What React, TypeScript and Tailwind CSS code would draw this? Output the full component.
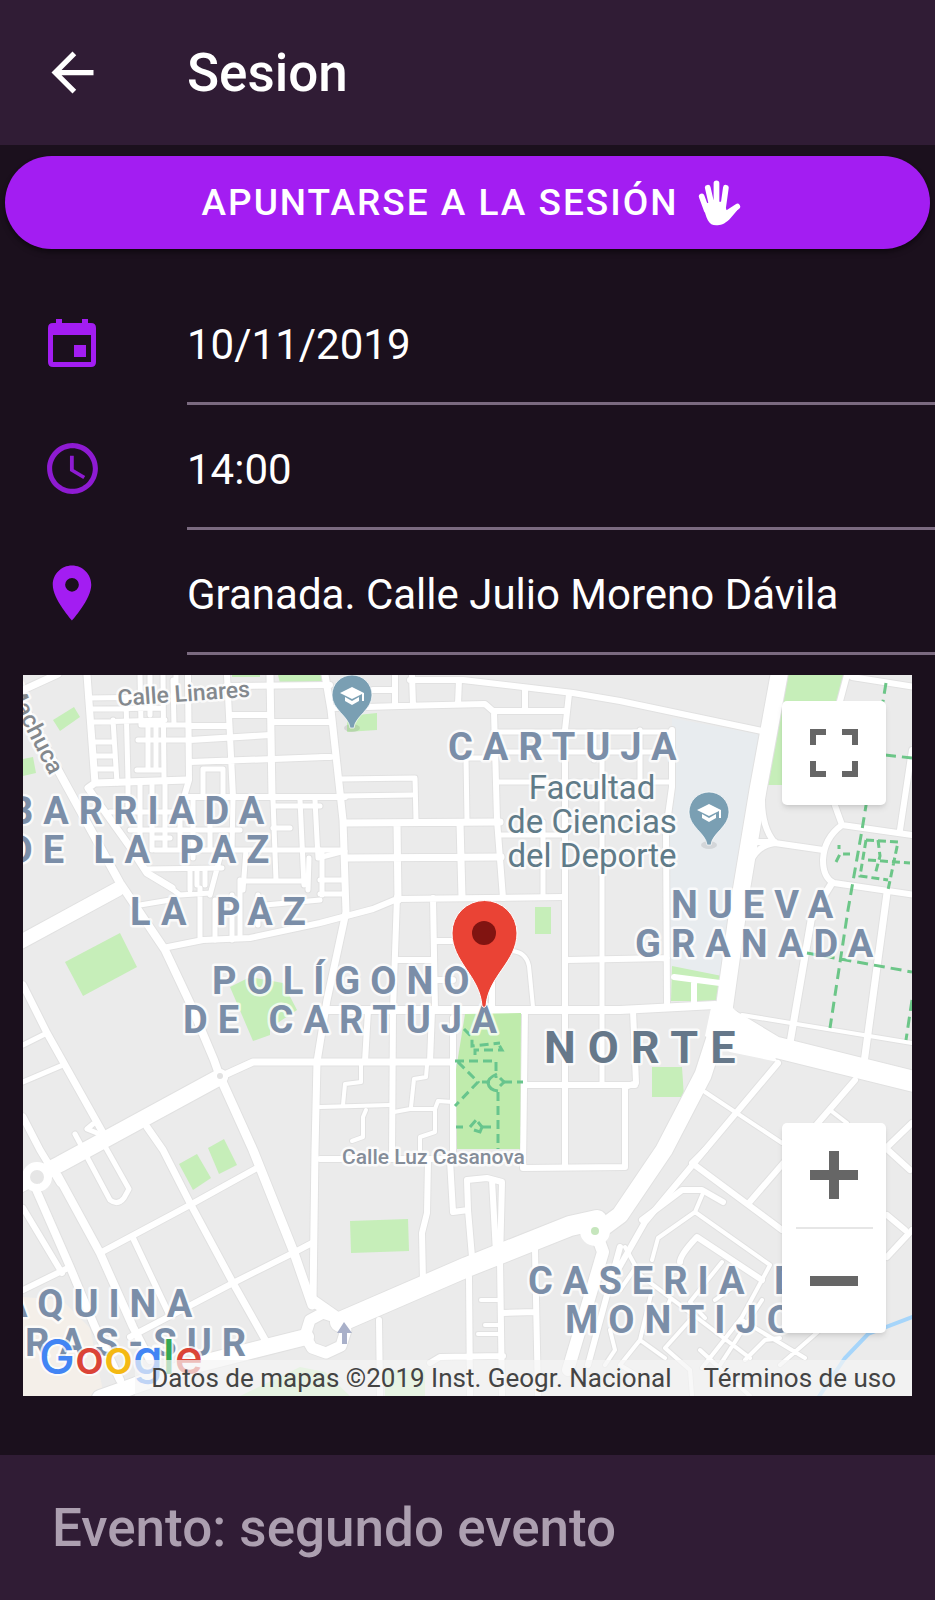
import type { ReactNode } from "react";
import { MdAccessTime, MdArrowBack, MdPlace } from "react-icons/md";

type Road = { w: number; d: string };

const roads: Road[] = [
  // Barriada de la Paz
  { w: 7, d: "M23 690L58 674M87 675L95 783L88 788L130 847L147 873L172 888M95 783L187 780M270 675L272 797" },
  { w: 8, d: "M23 705L58 770L120 883L165 950L190 1003L214 1060L220 1077" },
  { w: 6, d: "M188 675L189 780L184 797M187 797H345M227 675L233 797M188 726H226M190 740L270 735M190 762L325 757L330 757M230 715H268M273 722H330M226 686L330 685" },
  { w: 5, d: "M113 720L117 783M88 698L163 697M92 709L163 708M94 722L165 720M126 700L128 780M140 675L141 725M163 675L164 778M173 680L174 725M95 742H112M95 756H114M95 769H114M138 740H188M148 728V768M156 728V768M137 770H164M141 725H188M150 676V715M176 675V700" },
  { w: 5, d: "M203 797V769H223V797M128 785V810M140 783V840M152 785V850M165 783V850M180 800V850M193 800V858M210 797V850M233 797L232 850M110 812H190M130 830H240M155 850L320 850M145 869L222 868M245 881H305M273 800L276 880M300 800L304 885M274 806H320M315 800L318 858L345 851M309 858L308 890M273 828H290M222 850L210 895M246 850L243 890M154 838H170M190 870V890M197 870V885M205 870V885M160 880L180 895L210 893M200 888V940M215 900V940M232 895V940M258 895V925M240 880V935M140 905L170 900M265 905L320 900" },
  { w: 14, d: "M15 945L118 889" },
  // Cartuja
  { w: 7, d: "M325 675L331 710L343 820L346 912L327 1000L317 1062L315 1150L313 1300" },
  { w: 6, d: "M333 708L400 706L485 704L493 711H567M494 711L497 820L503 898M395 675V705M412 675L413 705M459 680L458 704M410 680L463 680L573 693L620 701L762 731M373 690H395M525 690V708M569 694L565 730V1150" },
  { w: 5, d: "M341 779L415 778L416 820M343 796L412 795M466 758L467 820M466 758H495M498 732H672M498 752H672M497 782H565M594 735V760M543 822V897M602 752V1082M565 782H672M500 835H565M640 730V790" },
  { w: 7, d: "M345 823L500 822M347 858L501 857M397 823L398 900M460 823L462 897" },
  { w: 5, d: "M320 722H331M320 757H335M320 850H342M320 880H345M320 894H345M322 850V895" },
  { w: 6, d: "M163 948L203 940L250 938L320 923L373 909L397 899L563 897M397 897L393 1010L392 1158M433 898L435 1010M432 1010L430 1062M368 1010L365 1062M435 941H453M397 960H433M435 980H453M492 960V1010" },
  { w: 4, d: "M512 951Q526 952 529 966L533 1007" },
  { w: 6, d: "M672 730V787L666 830L667 1003M567 960L667 958" },
  { w: 8, d: "M324 1010H620L715 1005" },
  { w: 6, d: "M453 1018L453 1160M525 1010L523 1168M525 1085H635M633 1010L636 1083L625 1087V1167M565 1085V1167M523 1168L625 1167M320 1159L455 1159H523" },
  { w: 4, d: "M361 1062V1082L345 1084L343 1105M320 1107L390 1105M427 1065L426 1077L414 1079L411 1107M394 1112L410 1109L435 1109L438 1101L453 1102M435 1110V1132L420 1137V1150M366 1110L363 1117V1137L352 1141" },
  // West side
  { w: 7, d: "M220 1077L253 1062H453M23 985L47 1033L103 1133M23 1117L40 1150L60 1183M147 1127L163 1150L190 1203L233 1283L268 1345" },
  { w: 5, d: "M23 1045L47 1033M23 1082L63 1065M93 1124L87 1129L97 1133M75 1134L82 1147M87 1157L110 1200Q118 1206 124 1198L129 1189L106 1148" },
  { w: 16, d: "M15 1187L60 1164L220 1077" },
  { w: 9, d: "M220 1077L253 1150L293 1250L312 1305" },
  { w: 8, d: "M58 1176L100 1253L133 1327L150 1360M34 1185L70 1267L95 1327L120 1380" },
  { w: 6, d: "M23 1208L62 1273M23 1290L70 1267M100 1253L190 1205L257 1168M133 1238L168 1312M130 1337L233 1283L293 1253L312 1243" },
  { w: 16, d: "M100 1398L187 1367L306 1337" },
  { w: 20, d: "M340 1322L467 1267L570 1226L597 1220" },
  { w: 11, d: "M312 1300L345 1323M323 1313L338 1318L346 1330L341 1346L326 1353L312 1348L305 1336L310 1320Z" },
  { w: 6, d: "M428 1160L427 1213L422 1233L423 1282M450 1160L453 1212L468 1210L467 1180L487 1178L502 1182L500 1260L502 1396M468 1210L472 1257M492 1180L496 1253M469 1277L470 1396M535 1250L538 1396M503 1313L535 1312M379 1320L380 1396M430 1363L440 1357L503 1356" },
  { w: 4, d: "M481 1300H500M485 1325H500M478 1334H500" },
  // Main avenues
  { w: 17, d: "M780 670L758 790L738 910L724 1010L703 1075L664 1150L620 1215L597 1232" },
  { w: 21, d: "M722 1015L775 1047L920 1083" },
  { w: 12, d: "M595 1230L603 1252L568 1370M583 1228L600 1237" },
  { w: 6, d: "M620 1247L588 1365M705 1150L645 1222L612 1280M778 1063L705 1150M855 1080L748 1204M912 1123L884 1150M912 1230L887 1257M887 1215L905 1230M888 1150L910 1170" },
  // Nueva Granada
  { w: 7, d: "M832 883L812 915L790 1043M887 893L864 1063" },
  { w: 6, d: "M847 675L835 720L833 800L842 825L912 835M852 677L915 687M912 750L900 830M842 825Q824 838 823 860Q823 878 834 883L915 895M775 843L823 850M762 800Q762 828 775 843Q758 845 750 862M757 842H775" },
  { w: 4, d: "M742 1015L912 1043M705 1092L782 1143M830 1110L847 1123" },
  // Caseria de Montijo
  { w: 6, d: "M705 1150L692 1163L782 1230M642 1220L682 1190H702L723 1202M680 1262Q680 1255 697 1237L762 1280" },
  { w: 4, d: "M703 1193L695 1212L658 1238L652 1260M695 1212L770 1265L742 1317L702 1368M625 1247L636 1267L620 1290M640 1275L700 1320L750 1358M722 1262L690 1302L705 1318M740 1282L715 1300M652 1290L640 1340L665 1358M640 1340L620 1365L645 1380M690 1320L665 1348L690 1370L692 1396M742 1320L805 1358M762 1300L720 1365M745 1360L765 1340L780 1338M700 1350L750 1396M610 1330L615 1350L605 1365M820 1330L780 1365M670 1300L660 1325" },
];

const greens = [
  "M53 720L74 707L80 717L60 731Z",
  "M23 759L33 757L36 773L23 776Z",
  "M278 675H327V681L280 683Z",
  "M232 675H260V677H232Z",
  "M347 716L377 713V730L347 732Z",
  "M65 962L120 933L137 967L83 996Z",
  "M230 987L250 977L283 983L297 1010L270 1028V1035L253 1041Z",
  "M535 907H551V934H535Z",
  "M652 1067H682L684 1097H652Z",
  "M350 1221L408 1219L409 1251L351 1253Z",
  "M179 1164L197 1154L211 1178L193 1190Z",
  "M208 1148L224 1139L237 1165L219 1174Z",
  "M787 675H845L838 705V785H768Z",
  "M672 966L722 976L718 1001H671Z",
  "M240 1396L300 1367L325 1372L350 1396Z",
  "M385 1370H425V1396H385Z",
];

function Label({ x, y, children }: { x: number; y: number; children: string }) {
  return (
    <text x={x} y={y} className="fill-[#7b8ea8] text-[38px] font-bold tracking-[10px]">
      {children}
    </text>
  );
}

function SchoolPin({ x, y }: { x: number; y: number }) {
  return (
    <g transform={`translate(${x} ${y})`}>
      <ellipse cx="0" cy="32" rx="8" ry="4" fill="#000" opacity="0.09" />
      <path d="M-2 32C-3 20-20 14-20-1A20 20 0 0 1 20-1C20 14 3 20 2 32Z" fill="#7a9fb3" stroke="#fff" strokeOpacity="0.7" strokeWidth="1" />
      <path d="M-12-3L0-9L12-3V5H10V-2L0 3Z" fill="#fff" />
      <path d="M-7 1V5L0 9L7 5V1L0 5Z" fill="#fff" />
    </g>
  );
}

function MapDrawing() {
  return (
    <svg
      viewBox="23 675 889 721"
      preserveAspectRatio="xMidYMid slice"
      className="block h-full w-full"
      role="img"
      aria-label="Mapa de Granada"
    >
      <rect x="23" y="675" width="889" height="721" fill="#ebebeb" />
      <path d="M672 718L762 735L738 895L722 978L667 966V830L672 790Z" fill="#e8ecef" />
      <path d="M23 1297L62 1300L90 1328L104 1396H23Z" fill="#f4efe9" />
      {greens.map((d) => (
        <path key={d} d={d} fill="#c6eeb9" />
      ))}
      <g fill="none" stroke="#e1e1e1" strokeLinejoin="round" strokeLinecap="round">
        {roads.map((r) => (
          <path key={r.d} d={r.d} strokeWidth={r.w + 2} />
        ))}
      </g>
      <path d="M728 1003L760 1035L778 1062L730 1052L705 1036L712 1003Z" fill="#fff" />
      <g fill="none" stroke="#fff" strokeLinejoin="round" strokeLinecap="round">
        {roads.map((r) => (
          <path key={r.d} d={r.d} strokeWidth={r.w} />
        ))}
        <circle cx="37" cy="1177" r="11" strokeWidth="8" />
        <path d="M674 977L720 983M694 980V1002" strokeWidth="6" />
      </g>
      <circle cx="37" cy="1177" r="7" fill="#e6e6e6" />
      <circle cx="220" cy="1076" r="3" fill="#e2e2e2" />
      <circle cx="595" cy="1231" r="15" fill="#fff" />
      <circle cx="595" cy="1231" r="4" fill="#c6e6bd" />
      <path d="M465 1014L521 1013L520 1149L457 1149L456 1070Z" fill="#bfebac" />
      <g fill="none" stroke="#68c58d" strokeWidth="3" strokeDasharray="9 5">
        <path d="M464 1029L472 1037V1046L500 1043M475 1055V1050H502L498 1043M455 1061H496V1078M458 1062L478 1082L455 1106M482 1082H490M503 1082H523M498 1092V1149M456 1127H463M470 1127L476 1120M482 1127H496" />
      </g>
      <path d="M497 1074Q488 1078 488 1083Q489 1090 498 1091M500 1078L504 1082L500 1086M474 1130L480 1132L482 1127L478 1122" fill="none" stroke="#68c58d" strokeWidth="3" />
      <g fill="none" stroke="#6cc688" strokeWidth="3" strokeDasharray="11 6">
        <path d="M886 683L862 830L848 910L830 1028M885 755L912 758M807 953L912 972M912 1000L906 1040" />
        <path d="M866 840L898 842L888 890M866 840L860 876L888 880M878 840L880 856L875 875M868 860L910 863M836 862L840 854H850M839 845V849" strokeDasharray="8 4" />
      </g>
      <path d="M915 1316L868 1334L845 1358L818 1398" fill="none" stroke="#a6d5fa" strokeWidth="4" />
      <path d="M344 1322L352 1333H347V1344H342V1333H337Z" fill="#a9b0c9" />

      <g className="font-[Roboto,sans-serif]" stroke="#fff" strokeOpacity="0.75" strokeWidth="5" strokeLinejoin="round" paintOrder="stroke">
        <Label x={448} y={760}>CARTUJA</Label>
        <Label x={9} y={824}>BARRIADA</Label>
        <Label x={8} y={863}>DE LA PAZ</Label>
        <Label x={130} y={925}>LA PAZ</Label>
        <Label x={212} y={994}>POLÍGONO</Label>
        <Label x={183} y={1033}>DE CARTUJA</Label>
        <Label x={671} y={918}>NUEVA</Label>
        <Label x={635} y={957}>GRANADA</Label>
        <Label x={2} y={1317}>AQUINA</Label>
        <Label x={25} y={1356}>RAS-SUR</Label>
        <Label x={528} y={1294}>CASERIA DE</Label>
        <Label x={565} y={1333}>MONTIJO</Label>
        <text x="544" y="1063" className="fill-[#66788a] text-[45px] font-bold tracking-[12px]">NORTE</text>
        <g className="fill-[#607b88] text-[33px]" textAnchor="middle">
          <text x="592" y="799">Facultad</text>
          <text x="592" y="833">de Ciencias</text>
          <text x="592" y="867">del Deporte</text>
        </g>
        <g className="fill-[#84898e] text-[23px] font-medium">
          <text transform="translate(118 706) rotate(-4)">Calle Linares</text>
          <text transform="translate(5 688) rotate(63)" className="text-[24px]">Machuca</text>
        </g>
        <text x="342" y="1164" className="fill-[#858d99] text-[21px] font-medium">Calle Luz Casanova</text>
      </g>

      <SchoolPin x={352} y={696} />
      <SchoolPin x={709} y={813} />
      <path
        d="M482 1006C480 976 452 962 452 933A32 32 0 0 1 517 933C517 962 488 976 486 1006Q484 1009 482 1006Z"
        fill="#ea4335"
        stroke="#fff"
        strokeWidth="1"
      />
      <circle cx="484" cy="933" r="12" fill="#811411" />

      <text x="39" y="1374" className="font-[Inter,sans-serif] text-[48px] font-medium" stroke="#fff" strokeOpacity="0.8" strokeWidth="4" paintOrder="stroke">
        <tspan fill="#4285f4">G</tspan>
        <tspan fill="#db4437">o</tspan>
        <tspan fill="#f4b913">o</tspan>
        <tspan fill="#4285f4">g</tspan>
        <tspan fill="#34a853">l</tspan>
        <tspan fill="#db4437">e</tspan>
      </text>
    </svg>
  );
}

function HandIcon() {
  return (
    <svg viewBox="690 150 128 137" className="h-[46px] w-[43px]" aria-hidden="true">
      <path
        d="M701 199L716 240M719 173L731 225M745 160V225M773 173L765 230M807 229L775 250"
        fill="none"
        stroke="#fff"
        strokeWidth="17"
        strokeLinecap="round"
      />
      <path d="M706 222L730 215H768L775 240L812 234L784 267C768 282 757 285 744 285C722 285 713 265 706 222Z" fill="#fff" />
    </svg>
  );
}

function CalendarIcon() {
  return (
    <svg viewBox="0 0 48 48" className="size-12" fill="currentColor" aria-hidden="true">
      <path
        fillRule="evenodd"
        d="M8 0H14V4H34V0H40V4H43Q48 4 48 9V43Q48 48 43 48H5Q0 48 0 43V9Q0 4 5 4H8ZM5 16V43H43V16Z"
      />
      <path d="M26 26H38V38H26Z" />
    </svg>
  );
}

function DetailRow({ icon, children }: { icon: ReactNode; children: ReactNode }) {
  return (
    <li className="flex h-[125px] items-stretch">
      <div className="flex w-[187px] shrink-0 items-center pt-px pl-[39px]">
        <div className="flex size-[66px] items-center justify-center text-[#a31df2]">{icon}</div>
      </div>
      <div className="flex min-w-0 grow items-center border-b-[3px] border-[#7b6a80] pt-1.5 text-[42px] text-white">{children}</div>
    </li>
  );
}

export default function App() {
  return (
    <div className="flex min-h-screen flex-col bg-[#1b101d] font-[Roboto,sans-serif]">
      <header className="flex h-[145px] items-center bg-[#301c35] pl-[41px] text-white">
        <button type="button" aria-label="Volver" className="mr-[83px]">
          <MdArrowBack size={63} />
        </button>
        <h1 className="pt-0.5 text-[53px] font-medium">Sesion</h1>
      </header>

      <main className="grow">
        <div className="px-[5px] pt-[11px]">
          <button
            type="button"
            className="flex h-[93px] w-full items-center justify-center gap-5 rounded-full bg-[#a31df2] pl-2 text-[37px] font-medium tracking-[2px] text-white shadow-md shadow-black/40"
          >
            APUNTARSE A LA SESIÓN
            <HandIcon />
          </button>
        </div>

        <ul className="mt-[31px]">
          <DetailRow icon={<CalendarIcon />}>10/11/2019</DetailRow>
          <DetailRow icon={<MdAccessTime size={61} className="opacity-85" />}>14:00</DetailRow>
          <DetailRow icon={<MdPlace size={66} />}>Granada. Calle Julio Moreno Dávila</DetailRow>
        </ul>

        <section aria-label="Mapa" className="relative mx-[23px] mt-5 mb-[59px] aspect-[889/721] overflow-hidden">
          <MapDrawing />

          <button
            type="button"
            aria-label="Pantalla completa"
            className="absolute top-[26px] right-[26px] flex size-[104px] items-center justify-center rounded-[5px] bg-white text-[#666666] shadow-md"
          >
            <svg viewBox="0 0 48 48" className="size-12" fill="none" stroke="currentColor" strokeWidth="6" aria-hidden="true">
              <path d="M3 16V3H16M32 3H45V16M45 32V45H32M16 45H3V32" />
            </svg>
          </button>

          <div className="absolute right-[26px] bottom-[63px] flex w-[104px] flex-col items-center rounded-[5px] bg-white text-[#666666] shadow-md">
            <button type="button" aria-label="Acercar" className="flex h-[104px] w-full items-center justify-center">
              <svg viewBox="0 0 48 48" className="size-12" fill="currentColor" aria-hidden="true">
                <path d="M0 19H19V0H29V19H48V29H29V48H19V29H0Z" />
              </svg>
            </button>
            <div className="h-[2px] w-[77px] bg-[#e6e6e6]" />
            <button type="button" aria-label="Alejar" className="flex h-[104px] w-full items-center justify-center">
              <svg viewBox="0 0 48 48" className="size-12" fill="currentColor" aria-hidden="true">
                <path d="M0 19H48V29H0Z" />
              </svg>
            </button>
          </div>

          <div className="absolute right-0 bottom-0 flex h-9 items-center gap-8 bg-[#f5f5f5]/70 pr-4 pl-4 text-[26px] whitespace-nowrap text-[#444444]">
            <span>Datos de mapas ©2019 Inst. Geogr. Nacional</span>
            <a href="#terminos">Términos de uso</a>
          </div>
        </section>
      </main>

      <footer className="flex h-[145px] items-center bg-[#301c35] pt-0.5 pl-[52px] text-[53px] font-medium text-[#ac9fb0]">
        Evento: segundo evento
      </footer>
    </div>
  );
}
